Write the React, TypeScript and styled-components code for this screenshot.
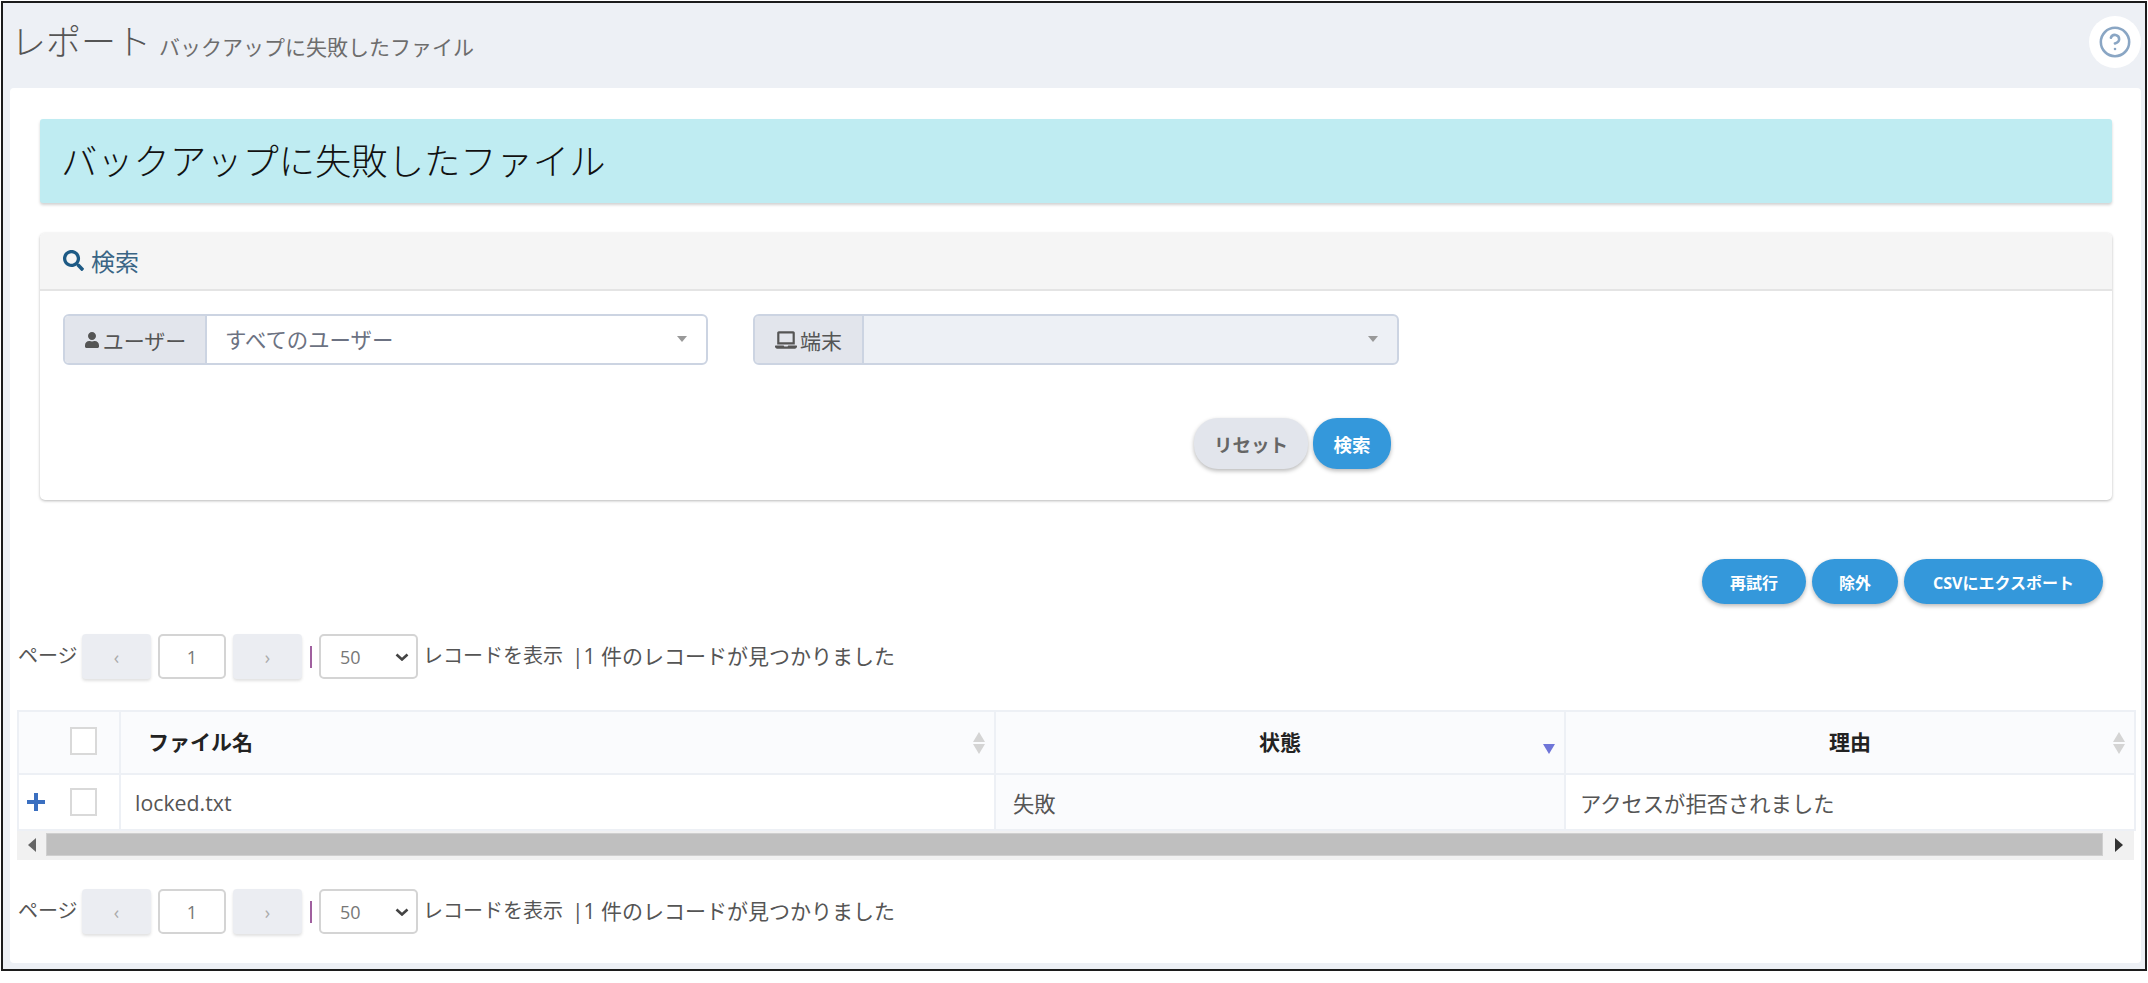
import styled, { createGlobalStyle } from "styled-components";
import { FaSearch, FaUser, FaLaptop } from "react-icons/fa";
import { CircleHelp } from "lucide-react";

const GlobalStyle = createGlobalStyle`
  html, body {
    margin: 0;
    background: #fff;
    font-family: "Open Sans", "Noto Sans CJK JP", sans-serif;
    color: #555;
  }
  * {
    box-sizing: border-box;
  }
`;

const Frame = styled.div`
  margin: 1px 0 0 1px;
  width: 2146px;
  height: 970px;
  border: 2px solid #1c1c1c;
  background: #edf0f5;
  display: flex;
  flex-direction: column;
`;

const Header = styled.header`
  height: 85px;
  flex: none;
  display: flex;
  align-items: center;
  justify-content: space-between;
  padding: 0 4px 0 8px;
`;

const TitleRow = styled.div`
  display: flex;
  align-items: baseline;
  gap: 8px;
  margin-top: -13px;
`;

const Title = styled.h1`
  margin: 0;
  font-size: 35px;
  font-weight: 300;
  color: #555;
`;

const Subtitle = styled.span`
  font-size: 21px;
  color: #6d6d6d;
`;

const HelpButton = styled.div`
  width: 52px;
  height: 52px;
  border-radius: 50%;
  background: #fff;
  display: flex;
  align-items: center;
  justify-content: center;
  color: #8aa6c4;
  margin-top: -7px;
`;

const Panel = styled.main`
  margin: 0 4px 0 7px;
  height: 875px;
  background: #fff;
  border-radius: 4px;
  padding: 31px 7px 0 8px;
`;

const Inner = styled.div`
  padding: 0 22px;
`;

const Banner = styled.div`
  height: 84px;
  background: #bfecf2;
  border-radius: 3px;
  box-shadow: 0 2px 3px rgba(0, 0, 0, 0.18);
  display: flex;
  align-items: center;
  padding: 0 0 3px 21px;
  font-size: 36.3px;
  font-weight: 300;
  color: #111;
`;

const SearchCard = styled.section`
  margin-top: 30px;
  height: 267px;
  border-radius: 5px;
  box-shadow: 0 1px 3px rgba(0, 0, 0, 0.28);
  background: #fff;
`;

const SearchHead = styled.div`
  height: 58px;
  background: #f5f5f5;
  border-bottom: 2px solid #e4e4e4;
  border-radius: 5px 5px 0 0;
  display: flex;
  align-items: center;
  gap: 7px;
  padding: 0 0 2px 23px;
  color: #3a6585;
  font-size: 24px;
  svg {
    color: #1d5a85;
  }
`;

const SearchBody = styled.div`
  width: 1359px;
  padding: 23px 0 0 23px;
`;

const Fields = styled.div`
  display: grid;
  grid-template-columns: 645px 646px;
  gap: 45px;
`;

const InputGroup = styled.div<{ $disabled?: boolean }>`
  height: 51px;
  display: flex;
  border: 2px solid #ccd4e2;
  border-radius: 6px;
  overflow: hidden;
  background: ${(props) => (props.$disabled ? "#edf0f5" : "#fff")};
`;

const Addon = styled.div<{ $width: number }>`
  width: ${(props) => props.$width}px;
  flex: none;
  display: flex;
  align-items: center;
  justify-content: center;
  gap: 3px;
  background: #e2e5ec;
  border-right: 2px solid #ccd4e2;
  font-size: 21px;
  color: #555;
`;

const SelectValue = styled.div`
  flex: 1;
  display: flex;
  align-items: center;
  justify-content: space-between;
  padding: 0 19px 2px 18px;
  font-size: 21.4px;
  color: #6c7282;
`;

const Caret = styled.span`
  width: 0;
  height: 0;
  border-left: 5px solid transparent;
  border-right: 5px solid transparent;
  border-top: 6px solid #999;
`;

const FormButtons = styled.div`
  margin-top: 53px;
  padding-right: 8px;
  display: flex;
  justify-content: flex-end;
  gap: 5px;
`;

const Pill = styled.button<{ $grey?: boolean; $big?: boolean; $width: number; $height: number }>`
  width: ${(props) => props.$width}px;
  height: ${(props) => props.$height}px;
  padding: 0;
  border: none;
  border-radius: 24px;
  font-family: inherit;
  font-size: ${(props) => (props.$big ? "18.5px" : "16px")};
  font-weight: 700;
  color: ${(props) => (props.$grey ? "#666" : "#fff")};
  background: ${(props) => (props.$grey ? "#e2e5ec" : "#3498db")};
  box-shadow: 0 2px 4px rgba(0, 0, 0, 0.28);
`;

const Actions = styled.div`
  margin-top: 59px;
  padding-right: 9px;
  display: flex;
  justify-content: flex-end;
  gap: 6px;
`;

const Pager = styled.div<{ $top: number }>`
  margin-top: ${(props) => props.$top}px;
  height: 45px;
  display: flex;
  align-items: center;
  font-size: 20px;
  color: #555;
`;

const PagerLabel = styled.span`
  width: 64px;
  margin-top: -4px;
`;

const PageArrow = styled.div`
  width: 69px;
  height: 45px;
  border-radius: 4px;
  background: #ebedf2;
  box-shadow: 0 2px 3px rgba(0, 0, 0, 0.12);
  display: flex;
  align-items: center;
  justify-content: center;
  color: #aaa;
  font-size: 18px;
`;

const PageInput = styled.div`
  width: 68px;
  height: 45px;
  margin: 0 7px;
  border: 2px solid #d4d4d4;
  border-radius: 5px;
  display: flex;
  align-items: center;
  justify-content: center;
  font-size: 18px;
  color: #777;
`;

const Divider = styled.span`
  width: 2px;
  height: 22px;
  margin: 0 7px 0 8px;
  background: #a0609f;
`;

const SizeWrap = styled.div`
  position: relative;
  width: 99px;
  height: 45px;
  svg {
    position: absolute;
    right: 9px;
    top: 19px;
    pointer-events: none;
  }
`;

const PageSize = styled.select`
  width: 100%;
  height: 100%;
  padding-left: 19px;
  appearance: none;
  border: 2px solid #d4d4d4;
  border-radius: 5px;
  background: #fff;
  font-family: inherit;
  font-size: 18px;
  color: #777;
`;

const PagerText = styled.span`
  margin: -4px 0 0 5px;
`;

const PagerCount = styled.span`
  margin: -4px 0 0 9px;
  font-size: 21px;
`;

const TableWrap = styled.div`
  margin: 31px 0 0 -1px;
`;

const Table = styled.table`
  width: 2117px;
  table-layout: fixed;
  border-collapse: collapse;
  font-size: 21.3px;
  color: #555;
`;

const Th = styled.th<{ $align?: string; $inset?: number }>`
  position: relative;
  height: 63px;
  padding: 0 0 4px ${(props) => props.$inset || 0}px;
  border: 2px solid #edf0f5;
  background: #fafbfd;
  font-size: 21px;
  font-weight: 700;
  color: #222;
  text-align: ${(props) => props.$align || "center"};
`;

const Td = styled.td<{ $sorted?: boolean; $flush?: boolean }>`
  height: 56px;
  padding: 0 0 0 ${(props) => (props.$flush ? 0 : props.$sorted ? 17 : 14)}px;
  border: 2px solid #edf0f5;
  background: ${(props) => (props.$sorted ? "#fafbfd" : "#fff")};
`;

const CheckCell = styled.div`
  display: flex;
  align-items: center;
  padding-left: 8px;
  gap: 25px;
`;

const HeadCheckCell = styled(CheckCell)`
  padding-left: 51px;
`;

const Check = styled.span`
  display: block;
  width: 27px;
  height: 28px;
  border: 2px solid #d9d9d9;
  background: #fff;
`;

const SortIcon = styled.svg`
  position: absolute;
  right: 8px;
  top: 19px;
`;

const ScrollBar = styled.div`
  width: 2117px;
  height: 29px;
  display: flex;
  align-items: center;
  background: #f1f1f1;
  padding-bottom: 2px;
`;

const ScrollArrow = styled.div<{ $width: number }>`
  width: ${(props) => props.$width}px;
  display: flex;
  justify-content: center;
`;

const Thumb = styled.div`
  flex: 1;
  height: 23px;
  background: #bfbfbf;
  border: 1px solid #cfcfcf;
`;

const Sort = ({ active }: { active?: boolean }) => (
  <SortIcon width="14" height="24" viewBox="0 0 14 24">
    {!active && <path d="M7 1 L13 11 L1 11 Z" fill="#d4d4d4" />}
    <path
      d="M1 13 L13 13 L7 23 Z"
      fill={active ? "#6f75d8" : "#d4d4d4"}
    />
  </SortIcon>
);

const PagerBar = ({ top }: { top: number }) => (
  <Pager $top={top}>
    <PagerLabel>ページ</PagerLabel>
    <PageArrow>‹</PageArrow>
    <PageInput>1</PageInput>
    <PageArrow>›</PageArrow>
    <Divider />
    <SizeWrap>
      <PageSize defaultValue="50">
        <option value="50">50</option>
      </PageSize>
      <svg width="14" height="8" viewBox="0 0 14 8">
        <path d="M1.5 1.5 L7 6.5 L12.5 1.5" fill="none" stroke="#444" strokeWidth="2.6" />
      </svg>
    </SizeWrap>
    <PagerText>レコードを表示</PagerText>
    <PagerCount>|1 件のレコードが見つかりました</PagerCount>
  </Pager>
);

const App = () => (
  <Frame>
    <GlobalStyle />
    <Header>
      <TitleRow>
        <Title>レポート</Title>
        <Subtitle>バックアップに失敗したファイル</Subtitle>
      </TitleRow>
      <HelpButton>
        <CircleHelp size={34} strokeWidth={1.8} />
      </HelpButton>
    </Header>
    <Panel>
      <Inner>
        <Banner>バックアップに失敗したファイル</Banner>
        <SearchCard>
          <SearchHead>
            <FaSearch size={21} />
            検索
          </SearchHead>
          <SearchBody>
            <Fields>
              <InputGroup>
                <Addon $width={142}>
                  <FaUser size={16} />
                  ユーザー
                </Addon>
                <SelectValue>
                  すべてのユーザー
                  <Caret />
                </SelectValue>
              </InputGroup>
              <InputGroup $disabled>
                <Addon $width={109}>
                  <FaLaptop size={22} />
                  端末
                </Addon>
                <SelectValue>
                  <span />
                  <Caret />
                </SelectValue>
              </InputGroup>
            </Fields>
            <FormButtons>
              <Pill $grey $big $width={114} $height={51}>
                リセット
              </Pill>
              <Pill $big $width={78} $height={51}>
                検索
              </Pill>
            </FormButtons>
          </SearchBody>
        </SearchCard>
        <Actions>
          <Pill $width={104} $height={45}>
            再試行
          </Pill>
          <Pill $width={86} $height={45}>
            除外
          </Pill>
          <Pill $width={199} $height={45}>
            CSVにエクスポート
          </Pill>
        </Actions>
      </Inner>
      <PagerBar top={30} />
      <TableWrap>
        <Table>
          <colgroup>
            <col width={102} />
            <col width={875} />
            <col width={570} />
            <col width={570} />
          </colgroup>
          <thead>
            <tr>
              <Th>
                <HeadCheckCell>
                  <Check />
                </HeadCheckCell>
              </Th>
              <Th $align="left" $inset={27}>
                ファイル名
                <Sort />
              </Th>
              <Th>
                状態
                <Sort active />
              </Th>
              <Th>
                理由
                <Sort />
              </Th>
            </tr>
          </thead>
          <tbody>
            <tr>
              <Td $flush>
                <CheckCell>
                  <svg width="18" height="18" viewBox="0 0 18 18">
                    <path d="M7 0h4v7h7v4h-7v7H7v-7H0V7h7z" fill="#3a6fc0" />
                  </svg>
                  <Check />
                </CheckCell>
              </Td>
              <Td>locked.txt</Td>
              <Td $sorted>失敗</Td>
              <Td>アクセスが拒否されました</Td>
            </tr>
          </tbody>
        </Table>
        <ScrollBar>
          <ScrollArrow $width={29}>
            <svg width="8" height="14" viewBox="0 0 8 14">
              <path d="M8 0 L8 14 L0 7 Z" fill="#666" />
            </svg>
          </ScrollArrow>
          <Thumb />
          <ScrollArrow $width={31}>
            <svg width="8" height="14" viewBox="0 0 8 14">
              <path d="M0 0 L0 14 L8 7 Z" fill="#333" />
            </svg>
          </ScrollArrow>
        </ScrollBar>
      </TableWrap>
      <PagerBar top={29} />
    </Panel>
  </Frame>
);

export default App;
